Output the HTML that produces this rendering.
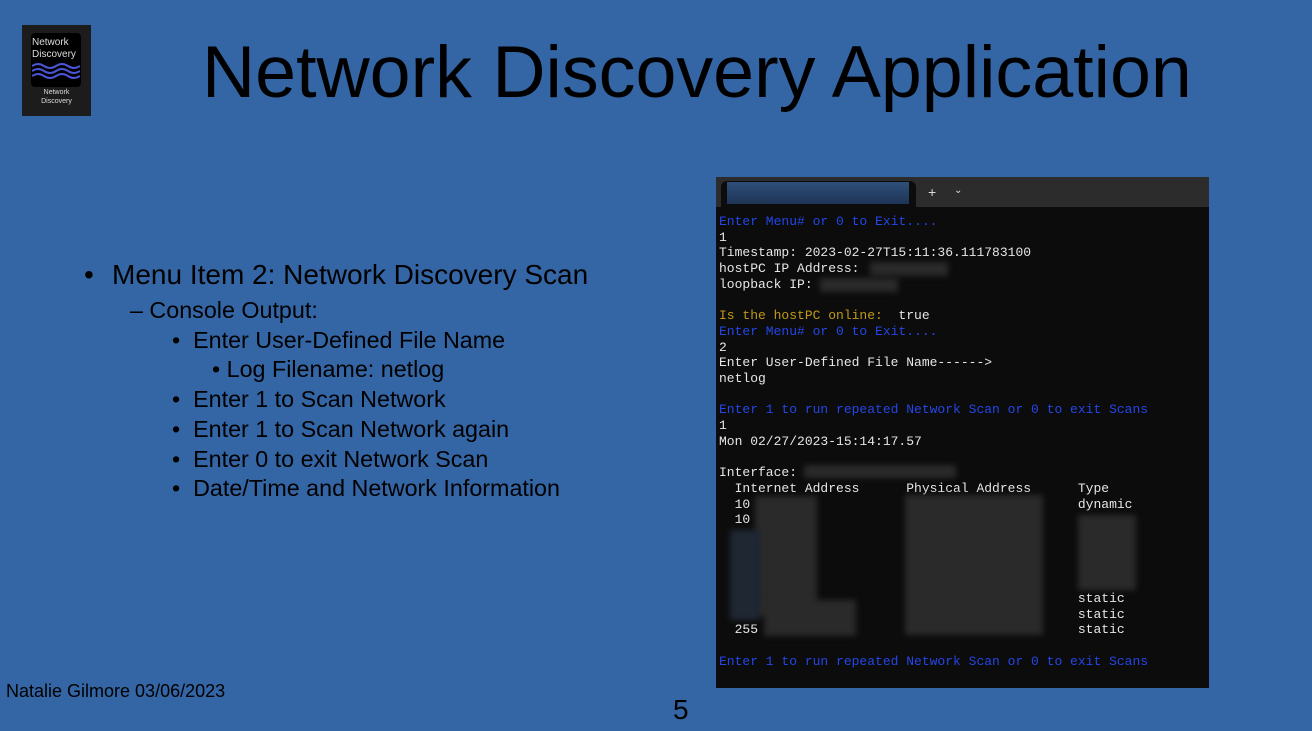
<!DOCTYPE html>
<html><head><style>
*{margin:0;padding:0}
body{width:1312px;height:731px;background:#3465a4;position:relative;overflow:hidden;font-family:"Liberation Sans",sans-serif;color:#000}
.a{position:absolute;white-space:nowrap}
.t{position:absolute;font-family:"Liberation Mono",monospace;font-size:13px;line-height:15.7px;white-space:pre;color:#e6e6e6}
.b{color:#2446e8}.y{color:#c09a18}
.blur{position:absolute;background:#2a2a2a;filter:blur(3px)}
.s{font-size:23.3px;line-height:26px}
</style></head><body>
<div class="a" style="left:22px;top:25px;width:69px;height:91px;background:#1c1c1c"></div>
<div class="a" style="left:31px;top:33px;width:50px;height:54px;background:#000;border-radius:4px"></div>
<div class="a" style="left:32px;top:37px;font-size:10px;line-height:12px;color:#ddd">Network<br>Discovery</div>
<svg class="a" style="left:32px;top:62px" width="48" height="20"><g fill="none" stroke="#4b55d8" stroke-width="2"><path d="M0 4q6-4 12 0t12 0t12 0t12 0"/><path d="M0 9q6-4 12 0t12 0t12 0t12 0"/><path d="M0 14q6-4 12 0t12 0t12 0t12 0"/></g></svg>
<div class="a" style="left:22px;top:88px;width:69px;text-align:center;font-size:7px;line-height:9px;color:#ddd">Network<br>Discovery</div>
<div class="a" style="left:202px;top:28px;font-size:73.6px;line-height:88px">Network Discovery Application</div>
<div class="a" style="left:84px;top:260px;font-size:28px;line-height:30px">•</div>
<div class="a" style="left:112px;top:260px;font-size:28px;line-height:30px">Menu Item 2: Network Discovery Scan</div>
<div class="a s" style="left:130px;top:297px">–&nbsp;Console Output:</div>
<div class="a s" style="left:172px;top:327px">•&nbsp;&nbsp;Enter User-Defined File Name</div>
<div class="a s" style="left:212px;top:356px">•&nbsp;Log Filename: netlog</div>
<div class="a s" style="left:172px;top:386px">•&nbsp;&nbsp;Enter 1 to Scan Network</div>
<div class="a s" style="left:172px;top:416px">•&nbsp;&nbsp;Enter 1 to Scan Network again</div>
<div class="a s" style="left:172px;top:446px">•&nbsp;&nbsp;Enter 0 to exit Network Scan</div>
<div class="a s" style="left:172px;top:475px">•&nbsp;&nbsp;Date/Time and Network Information</div>
<div class="a" style="left:6px;top:681px;font-size:18px">Natalie Gilmore 03/06/2023</div>
<div class="a" style="left:673px;top:694px;font-size:28px">5</div>

<div class="a" style="left:716px;top:177px;width:493px;height:511px;background:#0c0c0c"></div>
<div class="a" style="left:716px;top:177px;width:493px;height:30px;background:#2c2c2c"></div>
<div class="a" style="left:721px;top:181px;width:195px;height:26px;background:#0c0c0c;border-radius:6px 6px 0 0"></div>
<div class="a" style="left:727px;top:182px;width:182px;height:22px;background:linear-gradient(#2f4f7a,#1e3455)"></div>
<div class="a" style="left:928px;top:184px;font-size:14px;color:#ddd">+</div>
<div class="a" style="left:954px;top:185px;font-size:10px;color:#ddd">⌄</div>
<div class="t" style="left:719px;top:214px"><span class="b">Enter Menu# or 0 to Exit....</span>
1
Timestamp: 2023-02-27T15:11:36.111783100
hostPC IP Address:
loopback IP:

<span class="y">Is the hostPC online:</span>  true
<span class="b">Enter Menu# or 0 to Exit....</span>
2
Enter User-Defined File Name------>
netlog

<span class="b">Enter 1 to run repeated Network Scan or 0 to exit Scans</span>
1
Mon 02/27/2023-15:14:17.57

Interface:
  Internet Address      Physical Address      Type
  10                                          dynamic
  10




                                              static
                                              static
  255                                         static

<span class="b">Enter 1 to run repeated Network Scan or 0 to exit Scans</span></div>
<div class="blur" style="left:870px;top:262px;width:78px;height:14px"></div>
<div class="blur" style="left:820px;top:278px;width:78px;height:14px"></div>
<div class="blur" style="left:804px;top:465px;width:152px;height:13px"></div>
<div class="blur" style="left:755px;top:496px;width:62px;height:120px"></div>
<div class="blur" style="left:730px;top:530px;width:30px;height:90px;background:#1f2733"></div>
<div class="blur" style="left:764px;top:600px;width:92px;height:36px"></div>
<div class="blur" style="left:905px;top:495px;width:138px;height:140px"></div>
<div class="blur" style="left:1078px;top:515px;width:58px;height:75px"></div>
</body></html>
